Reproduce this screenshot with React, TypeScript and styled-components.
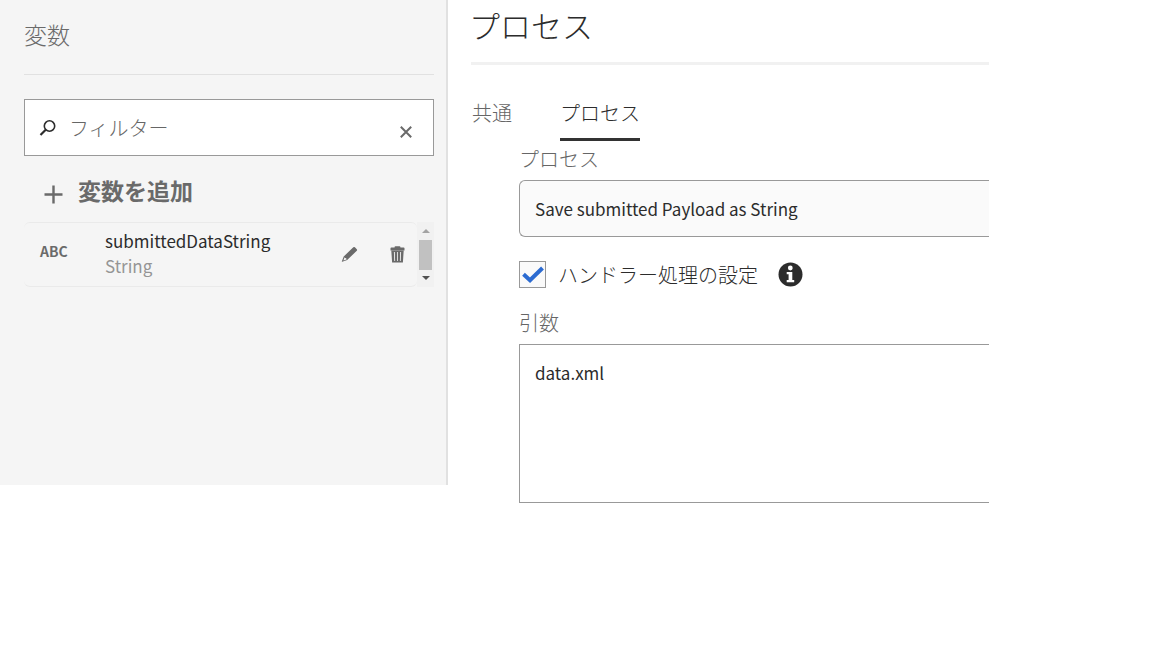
import React, { useState } from "react";
import styled, { createGlobalStyle } from "styled-components";

const GlobalStyle = createGlobalStyle`
  *, *::before, *::after { box-sizing: border-box; }
  body {
    margin: 0;
    background: #fff;
    color: #2c2c2c;
    font-family: "Noto Sans CJK JP", "Noto Sans", sans-serif;
    font-size: 20px;
    line-height: 24px;
    font-weight: 300;
  }
  button, input, select, textarea {
    margin: 0;
    font: inherit;
    color: inherit;
  }
`;

const Page = styled.div`
  display: flex;
  align-items: flex-start;
`;

const Sidebar = styled.aside`
  flex: 0 0 448px;
  padding: 0 12px 198px 24px;
  background: #f5f5f5;
  border-right: 2px solid #e1e1e1;
`;

const SidebarTitle = styled.h2`
  margin: 0 0 24px;
  padding: 18px 0 24px;
  border-bottom: 1px solid #e1e1e1;
  color: #6a6a6a;
  font-size: 23px;
  line-height: 32px;
  font-weight: 300;
`;

const FilterBox = styled.div`
  display: flex;
  align-items: center;
  height: 57px;
  padding: 0 20px 0 14px;
  border: 1px solid #999;
  background: #fff;
`;

const FilterInput = styled.input`
  flex: 1;
  min-width: 0;
  padding: 0 0 0 12px;
  border: 0;
  outline: 0;
  background: transparent;
  &::placeholder {
    color: #666;
    opacity: 1;
  }
`;

const PlainButton = styled.button`
  display: flex;
  align-items: center;
  padding: 0;
  border: 0;
  background: none;
  color: #6a6a6a;
  cursor: pointer;
`;

const ClearButton = styled(PlainButton)`
  padding-top: 8px;
`;

const AddButton = styled(PlainButton)`
  gap: 15px;
  height: 66px;
  padding: 0 0 0 20px;
  font-size: 23px;
  line-height: 32px;
  font-weight: 700;
  svg { margin-top: 10px; }
  span { margin-top: 2px; }
`;

const VariableScroller = styled.div`
  display: flex;
`;

const VariableList = styled.ul`
  flex: 1;
  min-width: 0;
  margin: 0;
  padding: 0;
  list-style: none;
`;

const VariableCard = styled.li`
  display: flex;
  align-items: center;
  height: 65px;
  padding: 0 12px 0 16px;
  border: 1px solid #eaeaea;
  border-width: 1px 0;
  border-radius: 6px;
`;

const TypeBadge = styled.span`
  width: 65px;
  padding-bottom: 8px;
  color: #6a6a6a;
  font-size: 14px;
  font-weight: 700;
`;

const VariableText = styled.div`
  flex: 1;
  display: flex;
  flex-direction: column;
  padding-bottom: 4px;
  font-size: 17px;
  line-height: 25px;
  font-weight: 400;
`;

const VariableType = styled.span`
  color: #959595;
`;

const Actions = styled.div`
  display: flex;
  gap: 32px;
`;

const ScrollTrack = styled.div`
  display: flex;
  flex-direction: column;
  align-items: center;
  justify-content: space-between;
  width: 17px;
  padding: 7px 0;
  background: #f1f1f1;
`;

const ScrollThumb = styled.div`
  width: 13px;
  height: 30px;
  background: #c1c1c1;
`;

const Main = styled.main`
  flex: 1;
  min-width: 0;
  margin: 0 163px 0 23px;
`;

const Title = styled.h1`
  margin: 0;
  padding: 5px 0 17px;
  border-bottom: 3px solid #f1f1f1;
  color: #2c2c2c;
  font-size: 31px;
  line-height: 40px;
  font-weight: 300;
  text-indent: -2px;
`;

const Tabs = styled.div`
  display: flex;
  gap: 48px;
  padding: 34px 0 0 1px;
`;

const Tab = styled.button<{ $active: boolean }>`
  height: 42px;
  padding: 0 0 12px;
  border: 0;
  border-bottom: 3px solid ${(p) => (p.$active ? "#323232" : "transparent")};
  background: none;
  color: ${(p) => (p.$active ? "#2c2c2c" : "#666")};
  cursor: pointer;
`;

const Form = styled.form`
  display: flex;
  flex-direction: column;
  padding: 6px 0 0 48px;
`;

const FieldLabel = styled.label`
  margin-bottom: 9px;
  color: #666;
`;

const ProcessSelect = styled.select`
  appearance: none;
  width: 100%;
  height: 57px;
  padding: 0 15px;
  border: 1px solid #999;
  border-right: 0;
  border-radius: 6px 0 0 6px;
  background: #fafafa;
  color: #2c2c2c;
  font-size: 17px;
  line-height: 25px;
  font-weight: 400;
`;

const CheckRow = styled.div`
  display: flex;
  align-items: center;
  gap: 20px;
  margin: 24px 0 23px;
`;

const CheckLabel = styled.label`
  display: flex;
  align-items: center;
  gap: 12px;
  color: #2c2c2c;
`;

const CheckFrame = styled.span`
  display: grid;
  width: 27px;
  height: 27px;
  > * { grid-area: 1 / 1; }
  svg { place-self: center; pointer-events: none; visibility: hidden; }
  input:checked + svg { visibility: visible; }
`;

const CheckInput = styled.input`
  appearance: none;
  width: 27px;
  height: 27px;
  border: 1px solid #999;
  background: #fafafa;
`;

const ArgumentsArea = styled.textarea`
  display: block;
  width: 100%;
  height: 159px;
  padding: 15px;
  border: 1px solid #999;
  border-right: 0;
  border-radius: 0;
  background: #fff;
  color: #2c2c2c;
  font-size: 17px;
  line-height: 25px;
  font-weight: 400;
  resize: none;
`;

const SearchIcon = () => (
  <svg width="18" height="18" viewBox="0 0 18 18" fill="none" stroke="#2c2c2c" aria-hidden="true">
    <circle cx="10.5" cy="7" r="5.2" strokeWidth="1.6" />
    <path d="M6.7 10.8L1.5 16" strokeWidth="2.2" />
  </svg>
);

const CloseIcon = () => (
  <svg width="14" height="14" viewBox="0 0 14 14" fill="none" stroke="#6a6a6a" strokeWidth="2" aria-hidden="true">
    <path d="M1.8 1.8L12.2 12.2M12.2 1.8L1.8 12.2" />
  </svg>
);

const PlusIcon = () => (
  <svg width="19" height="19" viewBox="0 0 19 19" fill="#6a6a6a" aria-hidden="true">
    <path d="M8.300 0.500h2.400v7.800h7.800v2.400h-7.800v7.800H8.300v-7.800H0.500V8.300h7.800z" />
  </svg>
);

const PencilIcon = () => (
  <svg width="17" height="17" viewBox="0 0 17 17" aria-hidden="true">
    <path
      fill="#6a6a6a"
      fillRule="evenodd"
      d="M12.3 1.3q.8-.8 1.6 0l1.9 1.9q.7.8 0 1.5L6.2 14l-5 1.7q-.5.1-.3-.4l1.8-4.8zM3.6 11.2l-1.2 3.3 3.1-1.1-.3-1.1-1.1-.2z"
    />
  </svg>
);

const TrashIcon = () => (
  <svg width="15" height="17" viewBox="0 0 15 17" fill="#6a6a6a" aria-hidden="true">
    <path d="M4.600 1.500V1q0-.8.8-.8h4.200q.8 0 .8.8v.5h3.300q.8 0 .8.8V4.500H.5V2.300q0-.8.8-.8z" />
    <path
      fillRule="evenodd"
      d="M1.300 4.500h12.400l-.8 11.900H2.100zM3.900 6l.4 9h.8l-.3-9zM7.100 6v9h.8V6zM10.200 6l-.3 9h.8l.4-9z"
    />
  </svg>
);

const Arrow = ({ down = false }: { down?: boolean }) => (
  <svg width="8" height="4" viewBox="0 0 8 4" aria-hidden="true">
    <path d={down ? "M0 0h8L4 4z" : "M0 4h8L4 0z"} fill={down ? "#505050" : "#a3a3a3"} />
  </svg>
);

const CheckIcon = () => (
  <svg width="27" height="27" viewBox="0 0 27 27" fill="none" stroke="#2c6bd1" strokeWidth="4" aria-hidden="true">
    <path d="M4.500 13.300L11 19.300L23.500 7" />
  </svg>
);

const InfoIcon = () => (
  <svg width="25" height="25" viewBox="0 0 25 25" aria-hidden="true">
    <circle cx="12.500" cy="12.500" r="12" fill="#2c2c2c" />
    <circle cx="12.300" cy="6" r="2.400" fill="#fff" />
    <path d="M8.700 10h5.600v8h1.900v2.200H8.700V18h1.900v-5.800H8.700z" fill="#fff" />
  </svg>
);

export default function App() {
  const [filter, setFilter] = useState("");
  const [tab, setTab] = useState("プロセス");
  return (
    <>
      <GlobalStyle />
      <Page>
        <Sidebar>
          <SidebarTitle>変数</SidebarTitle>
          <FilterBox>
            <SearchIcon />
            <FilterInput
              aria-label="フィルター"
              placeholder="フィルター"
              value={filter}
              onChange={(e) => setFilter(e.target.value)}
            />
            <ClearButton type="button" aria-label="クリア" onClick={() => setFilter("")}>
              <CloseIcon />
            </ClearButton>
          </FilterBox>
          <AddButton type="button">
            <PlusIcon />
            <span>変数を追加</span>
          </AddButton>
          <VariableScroller>
            <VariableList>
              <VariableCard>
                <TypeBadge>ABC</TypeBadge>
                <VariableText>
                  <span>submittedDataString</span>
                  <VariableType>String</VariableType>
                </VariableText>
                <Actions>
                  <PlainButton type="button" aria-label="編集">
                    <PencilIcon />
                  </PlainButton>
                  <PlainButton type="button" aria-label="削除">
                    <TrashIcon />
                  </PlainButton>
                </Actions>
              </VariableCard>
            </VariableList>
            <ScrollTrack aria-hidden="true">
              <Arrow />
              <ScrollThumb />
              <Arrow down />
            </ScrollTrack>
          </VariableScroller>
        </Sidebar>
        <Main>
          <Title>プロセス</Title>
          <Tabs role="tablist">
            {["共通", "プロセス"].map((name) => (
              <Tab
                key={name}
                type="button"
                role="tab"
                aria-selected={tab === name}
                $active={tab === name}
                onClick={() => setTab(name)}
              >
                {name}
              </Tab>
            ))}
          </Tabs>
          <Form>
            <FieldLabel htmlFor="process">プロセス</FieldLabel>
            <ProcessSelect id="process">
              <option>Save submitted Payload as String</option>
            </ProcessSelect>
            <CheckRow>
              <CheckLabel>
                <CheckFrame>
                  <CheckInput type="checkbox" defaultChecked />
                  <CheckIcon />
                </CheckFrame>
                ハンドラー処理の設定
              </CheckLabel>
              <PlainButton type="button" aria-label="情報">
                <InfoIcon />
              </PlainButton>
            </CheckRow>
            <FieldLabel htmlFor="arguments">引数</FieldLabel>
            <ArgumentsArea id="arguments" defaultValue="data.xml" />
          </Form>
        </Main>
      </Page>
    </>
  );
}
